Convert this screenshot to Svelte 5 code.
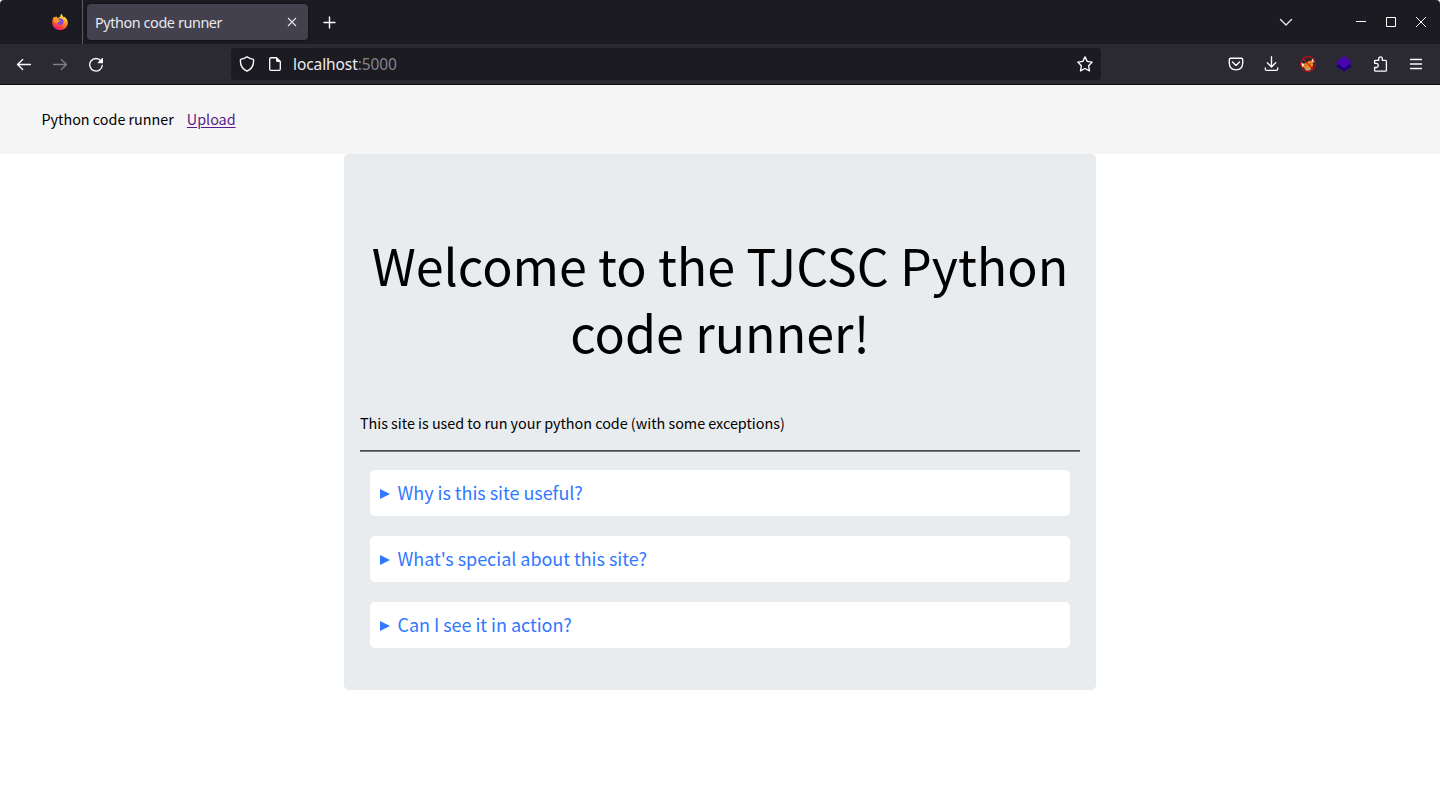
<script>
  const questions = ['Why is this site useful?', "What's special about this site?", 'Can I see it in action?'];
</script>

<div class="window">
  <header class="tabs">
    <div class="view">
      <svg width="18" height="18" viewBox="0 0 18 18">
        <defs>
          <linearGradient id="flame" x1="0.75" y1="0.05" x2="0.3" y2="1">
            <stop offset="0" stop-color="#fff04a" />
            <stop offset="0.42" stop-color="#ff9820" />
            <stop offset="0.72" stop-color="#ff4438" />
            <stop offset="1" stop-color="#e61887" />
          </linearGradient>
        </defs>
        <path fill="url(#flame)" d="M9.2 3.8Q9.2 2 10.8.8Q11.2 2.8 12.7 4.3L13.6 3.7Q17 6.4 16.8 10.4C16.2 14.6 13 17 9 17C4.6 17 1.2 14 1.2 9.2Q1.2 5.8 3 3.6L3.8 4.5L5.2 3.3L6.5 5Z" />
        <path fill="#8548df" d="M6.6 6Q8.3 4.6 10.7 5.7Q13.5 7.2 12.4 10Q11.3 12.5 8.5 12.2Q6 11.8 5.7 9.2Q7.2 10 9.2 8.6L7.8 8Q6.4 7.4 6.6 6Z" />
        <path fill="#ff9d1f" d="M3.5 5.5Q5.5 4.5 7.2 6.1L9 7.7L7 8.6Q5.7 9 5.9 10.5L3 9Z" />
      </svg>
    </div>
    <div class="tab">
      <span class="tab-title">Python code runner</span>
      <svg width="10" height="10" viewBox="0 0 10 10" stroke="#e5e4e9" stroke-width="1.1" fill="none"><path d="M1 1L9 9M9 1L1 9" /></svg>
    </div>
    <svg class="plus" width="14" height="14" viewBox="0 0 14 14" stroke="#fbfbfe" stroke-width="1.4" stroke-linecap="round"><path d="M1 7.5H12M6.5 2V13" /></svg>
    <div class="controls">
      <svg class="chevron" width="14" height="14" viewBox="0 0 14 14" fill="none" stroke="#e8e8ec" stroke-width="1.4" stroke-linecap="round" stroke-linejoin="round"><path d="M1.5 4.5L7 10L12.5 4.5" /></svg>
      <svg width="12" height="12" viewBox="0 0 12 12" stroke="#fff"><path d="M1 5.5H11" /></svg>
      <svg width="12" height="12" viewBox="0 0 12 12" stroke="#fff" fill="none"><path d="M1.5 1.5H10.5V10.5H1.5Z" /></svg>
      <svg width="12" height="12" viewBox="0 0 12 12" stroke="#fff" fill="none"><path d="M1 1L11 11M11 1L1 11" /></svg>
    </div>
  </header>

  <div class="toolbar">
    <div class="nav">
      <svg class="icon" viewBox="0 0 16 16"><path d="M14.4 8.5H1.5M6.7 3.5L1.5 8.5L6.7 13.5" /></svg>
      <svg class="icon dim" viewBox="0 0 16 16"><path d="M1.6 8.5H14.5M9.3 3.5L14.5 8.5L9.3 13.5" /></svg>
      <svg class="icon" viewBox="0 0 16 16"><path d="M13 4.9A6.3 6.3 0 1 0 14.3 9.3" /><path fill="#fbfbfe" stroke="none" d="M15 2.2V7.2H10Q9.5 7 9.8 6.5L14.2 2.1Q14.8 1.7 15 2.2Z" /></svg>
    </div>
    <div class="address">
      <svg class="icon" viewBox="0 0 16 16"><path d="M8 .8Q10.5 2.9 14.5 3.4Q15.4 11.6 8 15.2Q.6 11.6 1.5 3.4Q5.5 2.9 8 .8Z" /></svg>
      <svg class="icon" viewBox="0 0 16 16"><path d="M9.5 1.7H4Q2.7 1.7 2.7 3V13Q2.7 14.3 4 14.3H12Q13.3 14.3 13.3 13V5.5Z" /><path d="M9 1L14 6H10.5Q9 6 9 4.5Z" fill="#fbfbfe" stroke="none" /></svg>
      <span class="url">localhost<i>:5000</i></span>
      <svg class="icon star" viewBox="0 0 16 16"><path d="M8 .9L10.2 5.4L15.2 6.1L11.6 9.7L12.5 14.9L8 12.5L3.5 14.9L4.4 9.7L.8 6.1L5.8 5.4Z" /></svg>
    </div>
    <div class="tools">
      <svg class="icon" viewBox="0 0 16 16"><path d="M2.7 2.2H13.3Q14.7 2.2 14.7 3.5V7.5Q14.2 13.8 8 13.8Q1.8 13.8 1.3 7.5V3.5Q1.3 2.2 2.7 2.2ZM4.5 6L8 9.4L11.5 6" /></svg>
      <svg class="icon" viewBox="0 0 16 16"><path d="M7.5 .7V10.5M3.3 6.8L7.5 11L11.7 6.8M1.3 12V13Q1.3 14.3 2.6 14.3H12.4Q13.7 14.3 13.7 13V12" /></svg>
      <svg width="16" height="16" viewBox="0 0 16 16">
        <path fill="#ee8c1b" d="M2.5 8L6 7L9 5L12 4.5L13.2 8.5Q13 12 9.5 13.5H6L4 12Z" />
        <path fill="#eee6dd" d="M1 6.5L4 8L3.5 11.5L1.8 10ZM11.8 3.5L13.5 2L13.8 6.5L12 6Z" />
        <path fill="#b9aaa5" d="M5 13L8 12.3L11 13.5L9 14.8H6Z" />
        <path fill="#382529" d="M5.2 8.7L6.5 9.2L5.7 10ZM9.9 7.7L11.2 7.4L10.8 8.6Z" />
        <circle cx="8" cy="8" r="7.4" fill="none" stroke="#c60d15" stroke-width="1.1" />
        <path stroke="#c60d15" stroke-width="1.1" d="M2.7 2.7L13.3 13.3" />
      </svg>
      <svg width="16" height="16" viewBox="0 0 16 16"><path fill="#200078" d="M0 10L8 4.5L16 10L8 15.8Z" /><path fill="#4a05b3" d="M0 6.2L8 0L16 6.2L8 12.2Z" /></svg>
      <svg class="icon" viewBox="0 0 16 16"><path d="M2.6 7V5.2Q2.6 4.3 3.5 4.3H6.7V2.7Q6.7.8 8.5 .8Q10.3.8 10.3 2.7V4.3H13.5Q14.4 4.3 14.4 5.2V14.2Q14.4 15.1 13.5 15.1H3.5Q2.6 15.1 2.6 14.2V11.5H4.5Q6.3 11.3 6.3 9.5Q6.3 7.5 4.5 7.3H2.6" /></svg>
      <svg class="icon" viewBox="0 0 16 16"><path d="M2.5 3.5H13.5M2.5 8H13.5M2.5 12.5H13.5" /></svg>
    </div>
  </div>

  <nav class="site-nav">
    <span>Python code runner</span>
    <a href="#upload">Upload</a>
  </nav>

  <main>
    <h1>Welcome to the TJCSC Python<br />code runner!</h1>
    <p>This site is used to run your python code (with some exceptions)</p>
    <hr />
    {#each questions as question}
      <section class="question">
        <svg width="10" height="11" viewBox="0 0 10 11"><path fill="#3078ff" d="M0 1L10 6L0 11Z" /></svg>
        <span>{question}</span>
      </section>
    {/each}
  </main>
</div>

<style>
  :global(body) { margin: 0; background: #fff; overflow: hidden; }
  .window { height: 786px; overflow: hidden; font-family: "Noto Sans CJK SC", sans-serif; color: #000; }
  svg { display: block; flex: none; }
  .tabs { height: 44px; background: #1c1b22; display: flex; align-items: center; border-radius: 4px 4px 0 0; font-family: "Noto Sans", sans-serif; }
  .view { width: 31px; height: 31px; padding: 13px 0 0 51px; border-right: 1px solid #5a5960; }
  .tab { margin-left: 4px; width: 221px; height: 36px; box-sizing: border-box; padding: 0 11px 0 8px; display: flex; align-items: center; justify-content: space-between; background: #42414d; border-radius: 4px; box-shadow: 0 0 3px #0009; }
  .tab-title { padding-top: 1px; color: #e9e9ed; font-size: 14.4px; letter-spacing: -.41px; line-height: 20px; white-space: nowrap; }
  .plus { margin-left: 15px; }
  .controls { margin-left: auto; margin-right: 13px; display: flex; align-items: center; gap: 18px; }
  .chevron { margin-right: 44px; }
  .toolbar { height: 41px; box-sizing: border-box; border-bottom: 1px solid #0c0c0d; background: #2b2a33; display: flex; align-items: center; font-family: "Noto Sans", sans-serif; }
  .icon { width: 16px; height: 16px; fill: none; stroke: #fbfbfe; stroke-width: 1.35; stroke-linecap: round; stroke-linejoin: round; }
  .dim { opacity: .4; }
  .nav { display: flex; gap: 20px; padding-left: 16px; width: 215px; }
  .address { width: 870px; height: 32px; box-sizing: border-box; padding: 0 8px; display: flex; align-items: center; gap: 12px; background: #1c1b22; border-radius: 4px; }
  .url { color: #ececf0; font-size: 15.5px; letter-spacing: -.09px; line-height: 22px; margin-left: -2px; }
  .url i { font-style: normal; color: #85848b; }
  .star { margin-left: auto; }
  .tools { margin-left: auto; padding-right: 16px; display: flex; gap: 20px; }
  .site-nav { height: 69px; box-sizing: border-box; padding: 0 0 2px 41.5px; display: flex; align-items: center; gap: 13px; background: #f5f5f5; font-size: 14.35px; line-height: 20px; }
  a { color: #551a8b; text-underline-offset: 1.5px; }
  main { width: 752px; height: 536px; box-sizing: border-box; margin: 0 auto; padding: 77px 16px 0; background: #e9ecef; border-radius: 5px; }
  h1 { margin: 0; height: 134px; text-align: center; font-weight: 400; font-size: 50.2px; line-height: 67px; white-space: nowrap; }
  p { margin: 46px 0 0; font-size: 14.4px; letter-spacing: -.03px; line-height: 24px; white-space: nowrap; }
  hr { margin: 15px 0 18px; height: 2px; border: 0; background: linear-gradient(#4a4b4c 50%, #77797b 50%); }
  .question { height: 46px; margin: 0 10px 20px; padding-left: 10px; display: flex; align-items: center; gap: 7.5px; background: #fff; border-radius: 5px; color: #3078ff; font-size: 18px; letter-spacing: -.04px; line-height: 26px; }
  .question span { padding-bottom: 2px; }
</style>
